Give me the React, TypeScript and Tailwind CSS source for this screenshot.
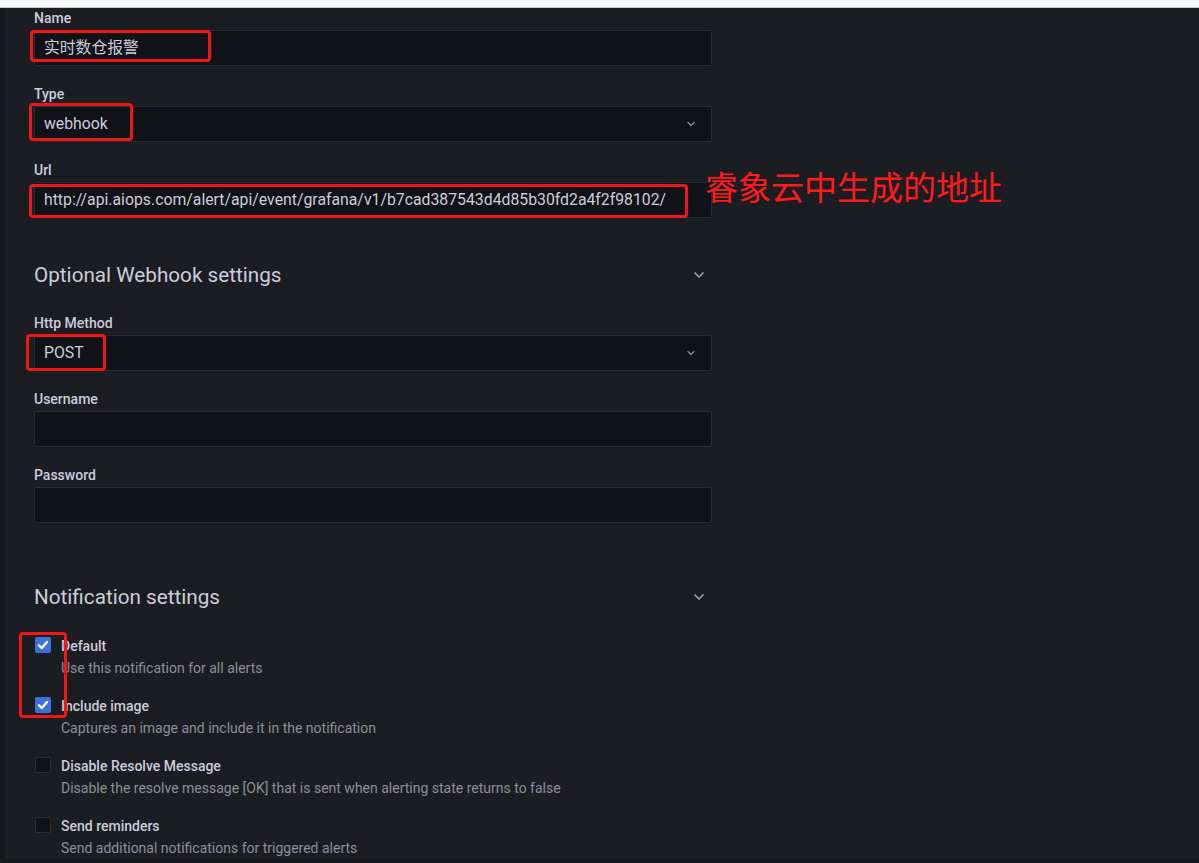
import { ChevronDown } from 'lucide-react'

const font = { fontFamily: 'Roboto, "Noto Sans CJK SC", sans-serif' }

function Label({ text }: { text: string }) {
  return <div className="h-4 mb-1 text-[14px] font-medium leading-4 text-[#ccccdc]">{text}</div>
}

function Input({ value }: { value?: string }) {
  return (
    <div className="h-9 flex items-center pl-[9px] bg-[#111217] border border-[#2a2c31] rounded-[2px] text-[15.8px] text-[#ccccdc] whitespace-nowrap overflow-hidden">
      {value}
    </div>
  )
}

function Select({ value }: { value: string }) {
  return (
    <div className="h-9 flex items-center justify-between pl-[9px] pr-[14px] bg-[#111217] border border-[#2a2c31] rounded-[2px] text-[15.8px] text-[#ccccdc]">
      <span>{value}</span>
      <ChevronDown size={12} strokeWidth={2.5} color="#8e8e99" />
    </div>
  )
}

function Field({ label, children }: { label: string; children: React.ReactNode }) {
  return (
    <div className="mb-5 shrink-0">
      <Label text={label} />
      {children}
    </div>
  )
}

function Section({ title }: { title: string }) {
  return (
    <div className="flex items-center justify-between h-7 pr-[5px]">
      <span className="text-[20.7px] leading-7 text-[#ccccdc]">{title}</span>
      <ChevronDown size={16} strokeWidth={2.5} color="#9fa2ab" />
    </div>
  )
}

function Check({ checked, label, desc }: { checked: boolean; label: string; desc: string }) {
  return (
    <div className="flex items-start h-[60px] shrink-0">
      <div className={`mt-[1px] ml-[1px] w-4 h-4 shrink-0 rounded-[2px] flex items-center justify-center ${checked ? 'bg-[#3d71d9]' : 'bg-[#111217] border border-[#2c2e33]'}`}>
        {checked && (
          <svg width="12" height="12" viewBox="0 0 12 12">
            <path d="M2 6.3 L4.8 9 L10 3" fill="none" stroke="#fff" strokeWidth="2.4" strokeLinecap="round" strokeLinejoin="round" />
          </svg>
        )}
      </div>
      <div className="ml-[10px]">
        <div className="text-[14px] font-medium leading-5 text-[#ccccdc]">{label}</div>
        <div className="mt-[2px] text-[14px] leading-5 text-[#8e8e99]">{desc}</div>
      </div>
    </div>
  )
}

export default function App() {
  return (
    <div className="relative w-[1199px] h-[863px] overflow-hidden bg-[#1b1d22]" style={font}>
      <div className="h-[8px] bg-[#f7f8fa] border-b border-[#c9cbcf]" />
      <div className="flex h-[850px]">
        <div className="w-[7px] bg-[#141619] border-r border-[#24262b]" />
        <div className="flex flex-col pl-[27px] pt-[2px] w-[705px]">
          <Field label="Name"><Input value="实时数仓报警" /></Field>
          <Field label="Type"><Select value="webhook" /></Field>
          <Field label="Url"><Input value="http://api.aiops.com/alert/api/event/grafana/v1/b7cad387543d4d85b30fd2a4f2f98102/" /></Field>
          <div className="mt-[23px] mb-[26px] shrink-0"><Section title="Optional Webhook settings" /></div>
          <Field label="Http Method"><Select value="POST" /></Field>
          <Field label="Username"><Input /></Field>
          <Field label="Password"><Input /></Field>
          <div className="mt-10 mb-[25px] shrink-0"><Section title="Notification settings" /></div>
          <Check checked label="Default" desc="Use this notification for all alerts" />
          <Check checked label="Include image" desc="Captures an image and include it in the notification" />
          <Check checked={false} label="Disable Resolve Message" desc="Disable the resolve message [OK] that is sent when alerting state returns to false" />
          <Check checked={false} label="Send reminders" desc="Send additional notifications for triggered alerts" />
        </div>
      </div>
      <div className="h-[5px] bg-[#17191d]" />

      {/* red annotations */}
      <div className="absolute left-[30px] top-[30px] w-[181px] h-[32px] border-[3px] border-[#f01616] rounded-[4px]" />
      <div className="absolute left-[29px] top-[103px] w-[104px] h-[38px] border-[3px] border-[#f01616] rounded-[4px]" />
      <div className="absolute left-[29px] top-[184px] w-[659px] h-[34px] border-[3px] border-[#f01616] rounded-[4px]" />
      <div className="absolute left-[26px] top-[334px] w-[80px] h-[37px] border-[3px] border-[#f01616] rounded-[4px]" />
      <div className="absolute left-[19px] top-[632px] w-[48px] h-[86px] border-[3px] border-[#f01616] rounded-[4px]" />
      <div className="absolute left-[705px] top-[164px] text-[33px] leading-[44px] text-[#ff1a1a]" style={{ fontFamily: '"Noto Sans CJK SC", sans-serif' }}>
        睿象云中生成的地址
      </div>
    </div>
  )
}
